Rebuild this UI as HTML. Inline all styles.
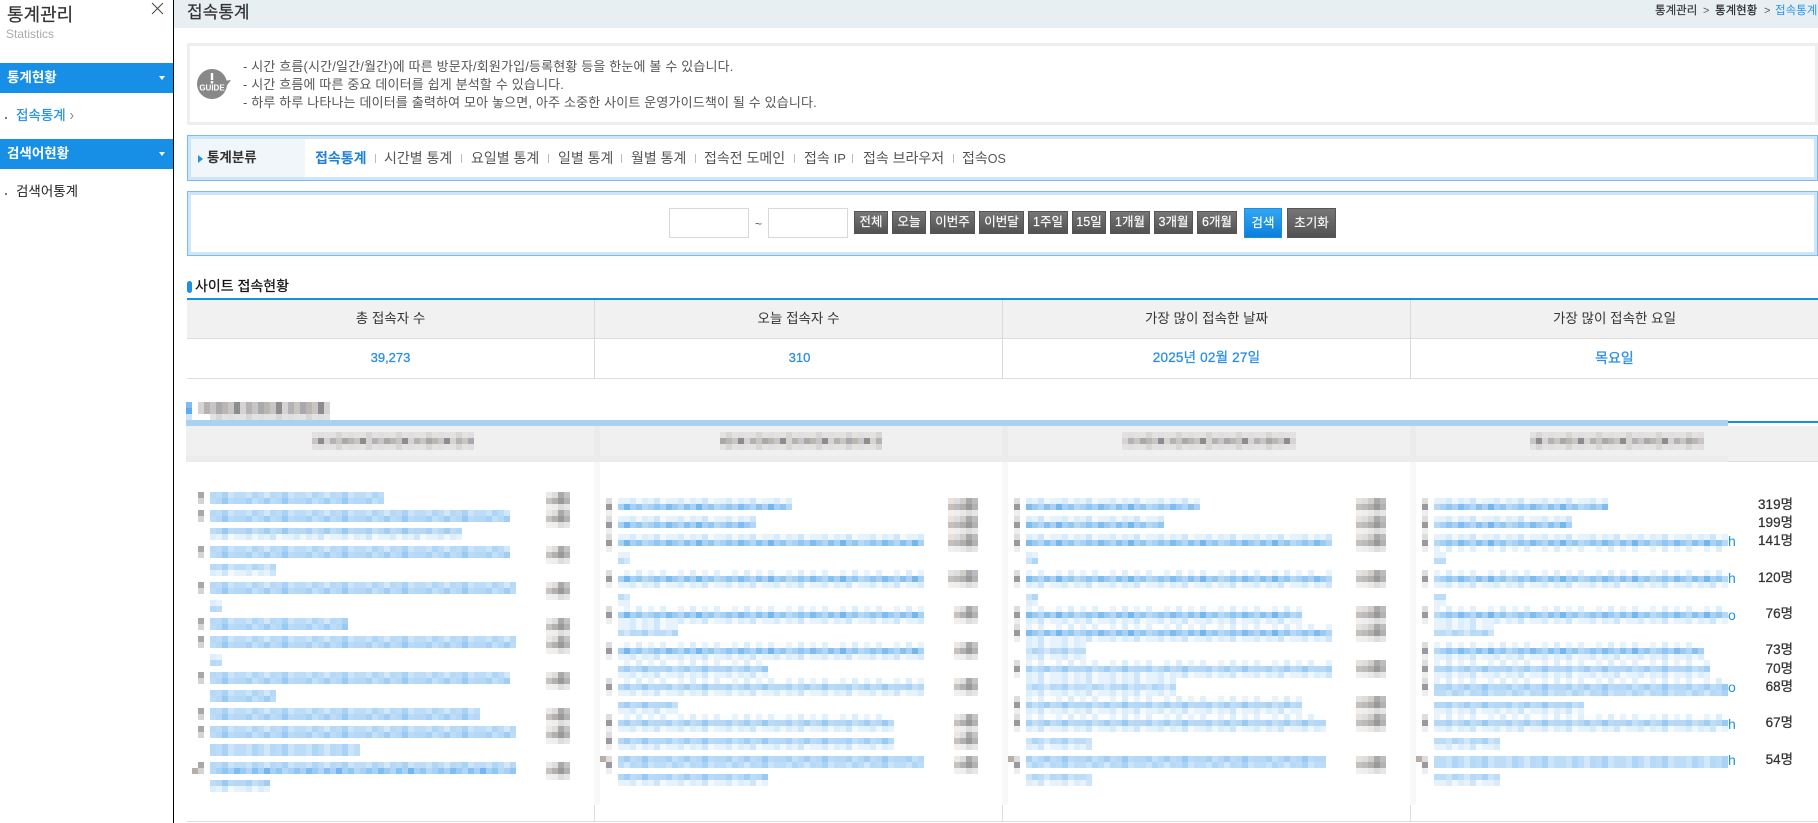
<!DOCTYPE html>
<html lang="ko"><head><meta charset="utf-8"><title>접속통계</title>
<style>
html,body{margin:0;padding:0;background:#fff}
body{width:1818px;height:823px;position:relative;overflow:hidden;font-family:"Liberation Sans","Noto Sans CJK KR",sans-serif;color:#333}
.a{position:absolute}
.t{position:absolute;white-space:nowrap;line-height:16px;font-size:14px}
.c{position:absolute;white-space:nowrap;line-height:16px;font-size:14px;text-align:center}
.b{font-weight:700}
.sep{position:absolute;width:1px;height:9px;top:154px;background:#bbb}
.btn{position:absolute;top:211px;height:21px;border:1px solid #555;background:linear-gradient(#767676,#525252);color:#fff;font-size:12.5px;line-height:21px;text-align:center;box-sizing:content-box;-webkit-text-stroke:.15px #fff}
.cnt{position:absolute;right:25px;font-size:13.500px;line-height:16px;color:#333;-webkit-text-stroke:.25px #333;white-space:nowrap}
.h{position:absolute;left:1728px;font-size:14px;line-height:16px;color:#1f8fe8}
.g1{font-size:13px;letter-spacing:.16px;color:#555}
.v{color:#2a8fe8;-webkit-text-stroke:.3px #2a8fe8;font-size:13px}
svg rect{height:6px}
svg .s{fill:url(#ps)}svg .m{fill:url(#pm)}svg .n{fill:url(#pn)}svg .l{fill:url(#pl)}svg .x{fill:url(#px)}svg .g{fill:url(#pg)}svg .k{fill:url(#pk)}
</style></head><body>

<!-- sidebar -->
<div class="a" style="left:173px;top:0;width:1px;height:823px;background:#000"></div>
<div class="t" style="left:7px;top:5px;font-size:18px;line-height:20px;color:#333;-webkit-text-stroke:.2px #333">통계관리</div>
<div class="t" style="left:6px;top:26px;font-size:12px;color:#aaa">Statistics</div>
<svg class="a" style="left:151px;top:2px" width="13" height="13"><path d="M1 1L12 12M12 1L1 12" stroke="#444" stroke-width="1" fill="none"/></svg>
<div class="a" style="left:0;top:63px;width:173px;height:30px;background:#178fe6"></div>
<div class="t b" style="left:7px;top:70px;color:#fff;font-size:13.500px">통계현황</div>
<svg class="a" style="left:159px;top:76px" width="6" height="4"><path d="M0 0H6L3 4Z" fill="#fff"/></svg>
<div class="a" style="left:5px;top:117px;width:2px;height:2px;background:#777"></div>
<div class="t" style="left:16px;top:108px;color:#1f8fe8;font-size:13.500px;-webkit-text-stroke:.2px #1f8fe8">접속통계</div>
<svg class="a" style="left:70px;top:113px" width="4" height="6"><path d="M.5 0L3 3L.5 6" stroke="#888" fill="none"/></svg>
<div class="a" style="left:0;top:139px;width:173px;height:30px;background:#178fe6"></div>
<div class="t b" style="left:7px;top:146px;color:#fff;font-size:13.500px">검색어현황</div>
<svg class="a" style="left:159px;top:152px" width="6" height="4"><path d="M0 0H6L3 4Z" fill="#fff"/></svg>
<div class="a" style="left:5px;top:193px;width:2px;height:2px;background:#777"></div>
<div class="t" style="left:16px;top:184px;color:#222;font-size:13.500px">검색어통계</div>

<!-- top bar -->
<div class="a" style="left:174px;top:0;width:1644px;height:28px;background:#e8eff3"></div>
<div class="t" style="left:187px;top:3px;font-size:17px;line-height:20px;color:#333;-webkit-text-stroke:.2px #333">접속통계</div>
<div class="t" style="left:1655px;top:3px;font-size:11.500px;color:#333;-webkit-text-stroke:.15px #333">통계관리</div>
<div class="t" style="left:1703px;top:3px;font-size:11px;color:#555">&gt;</div>
<div class="t" style="left:1715px;top:3px;font-size:11.500px;color:#222;-webkit-text-stroke:.15px #222">통계현황</div>
<div class="t" style="left:1764px;top:3px;font-size:11px;color:#555">&gt;</div>
<div class="t" style="left:1775px;top:3px;font-size:11.500px;color:#2a93ea">접속통계</div>

<!-- guide -->
<div class="a" style="left:187px;top:43px;width:1625px;height:76px;border:3px solid #eee"></div>
<svg class="a" style="left:196px;top:68px" width="36" height="32"><circle cx="16" cy="16" r="15" fill="#888"/><path d="M27 13L35 12L29 20Z" fill="#888"/><rect x="14.800" y="5" width="2.400" style="height:7px" fill="#fff"/><rect x="14.800" y="13" width="2.400" style="height:2.500px" fill="#fff"/><text x="16" y="22.500" text-anchor="middle" font-family="Liberation Sans" font-size="8" font-weight="700" fill="#fff">GUIDE</text></svg>
<div class="t g1" style="left:243px;top:59px">- 시간 흐름(시간/일간/월간)에 따른 방문자/회원가입/등록현황 등을 한눈에 볼 수 있습니다.</div>
<div class="t g1" style="left:243px;top:77px">- 시간 흐름에 따른 중요 데이터를 쉽게 분석할 수 있습니다.</div>
<div class="t g1" style="left:243px;top:95px">- 하루 하루 나타나는 데이터를 출력하여 모아 놓으면, 아주 소중한 사이트 운영가이드책이 될 수 있습니다.</div>

<!-- nav -->
<div class="a" style="left:187px;top:135px;width:1623px;height:38px;border:1px solid #7bbcf0;box-shadow:inset 0 0 0 3px #cfe6f8;padding:0 3px 6px 3px;box-sizing:content-box"></div>
<div class="a" style="left:191px;top:139px;width:114px;height:38px;background:#f1f6fa"></div>
<svg class="a" style="left:198px;top:155px" width="5" height="8"><path d="M0 0L5 4L0 8Z" fill="#1f8fe8"/></svg>
<div class="t b" style="left:207px;top:150px;color:#333;font-size:13.500px">통계분류</div>
<div class="t b" style="left:315px;top:150px;color:#1f82d8">접속통계</div>
<div class="sep" style="left:375px"></div>
<div class="t" style="left:384px;top:150px;color:#555">시간별 통계</div>
<div class="sep" style="left:461px"></div>
<div class="t" style="left:471px;top:150px;color:#555">요일별 통계</div>
<div class="sep" style="left:548px"></div>
<div class="t" style="left:558px;top:150px;color:#555">일별 통계</div>
<div class="sep" style="left:621px"></div>
<div class="t" style="left:631px;top:150px;color:#555">월별 통계</div>
<div class="sep" style="left:695px"></div>
<div class="t" style="left:704px;top:150px;color:#555">접속전 도메인</div>
<div class="sep" style="left:794px"></div>
<div class="t" style="left:804px;top:150px;color:#555">접속 <span style="font-size:13px">IP</span></div>
<div class="sep" style="left:852px"></div>
<div class="t" style="left:863px;top:150px;color:#555">접속 브라우저</div>
<div class="sep" style="left:953px"></div>
<div class="t" style="left:962px;top:150px;color:#555">접속<span style="font-size:12.500px">OS</span></div>

<!-- search -->
<div class="a" style="left:187px;top:191px;width:1623px;height:57px;border:1px solid #7bbcf0;box-shadow:inset 0 0 0 3px #cfe6f8;padding:0 3px 6px 3px"></div>
<div class="a" style="left:669px;top:208px;width:78px;height:28px;border:1px solid #d8d8d8"></div>
<div class="a" style="left:768px;top:208px;width:78px;height:28px;border:1px solid #d8d8d8"></div>
<div class="t" style="left:755px;top:216px;font-size:12px;color:#555">~</div>
<div class="btn" style="left:854px;width:32px">전체</div>
<div class="btn" style="left:892px;width:32px">오늘</div>
<div class="btn" style="left:930px;width:43px">이번주</div>
<div class="btn" style="left:979px;width:43px">이번달</div>
<div class="btn" style="left:1028px;width:38px">1주일</div>
<div class="btn" style="left:1072px;width:32px">15일</div>
<div class="btn" style="left:1110px;width:38px">1개월</div>
<div class="btn" style="left:1154px;width:37px">3개월</div>
<div class="btn" style="left:1197px;width:38px">6개월</div>
<div class="btn" style="left:1244px;top:208px;width:36px;height:28px;line-height:28px;background:linear-gradient(#35a6f5,#0a80dc);border-color:#1a8fe0">검색</div>
<div class="btn" style="left:1287px;top:208px;width:47px;height:28px;line-height:28px">초기화</div>

<!-- summary -->
<div class="a" style="left:187px;top:281px;width:5px;height:12px;border-radius:2.500px;background:#1f8fe8"></div>
<div class="t" style="left:195px;top:278px;font-size:14px;color:#111;-webkit-text-stroke:.25px #111">사이트 접속현황</div>
<div class="a" style="left:187px;top:298px;width:1631px;height:2px;background:#178fe6"></div>
<div class="a" style="left:187px;top:300px;width:1631px;height:38px;background:#f1f1f1"></div>
<div class="a" style="left:187px;top:338px;width:1631px;height:1px;background:#ddd"></div>
<div class="a" style="left:187px;top:378px;width:1631px;height:1px;background:#ddd"></div>
<div class="a" style="left:594px;top:300px;width:1px;height:78px;background:#d9d9d9"></div>
<div class="a" style="left:1002px;top:300px;width:1px;height:78px;background:#d9d9d9"></div>
<div class="a" style="left:1410px;top:300px;width:1px;height:78px;background:#d9d9d9"></div>
<div class="c" style="left:187px;width:407px;top:311px;font-size:13.500px;color:#333">총 접속자 수</div>
<div class="c" style="left:595px;width:407px;top:311px;font-size:13.500px;color:#333">오늘 접속자 수</div>
<div class="c" style="left:1003px;width:407px;top:311px;font-size:13.500px;color:#333">가장 많이 접속한 날짜</div>
<div class="c" style="left:1411px;width:407px;top:311px;font-size:13.500px;color:#333">가장 많이 접속한 요일</div>
<div class="c v" style="left:187px;width:407px;top:350px">39,273</div>
<div class="c v" style="left:596px;width:407px;top:350px">310</div>
<div class="c v" style="left:1003px;width:407px;top:350px;font-size:13.500px;letter-spacing:.2px">2025년 02월 27일</div>
<div class="c v" style="left:1411px;width:407px;top:350px;font-size:14px">목요일</div>

<!-- lower table backgrounds -->
<div class="a" style="left:186px;top:426px;width:1632px;height:36px;background:#f0f0f0"></div>
<div class="a" style="left:186px;top:456px;width:1542px;height:6px;background:#ececec"></div>
<div class="a" style="left:1728px;top:461px;width:90px;height:1px;background:#ddd"></div>
<div class="a" style="left:186px;top:420px;width:1542px;height:6px;background:#a8d2f0"></div>
<div class="a" style="left:1728px;top:421px;width:90px;height:2px;background:#178fe6"></div>
<div class="a" style="left:594px;top:426px;width:6px;height:36px;background:#ebebeb"></div>
<div class="a" style="left:1002px;top:426px;width:6px;height:36px;background:#ebebeb"></div>
<div class="a" style="left:1410px;top:426px;width:6px;height:36px;background:#ebebeb"></div>
<div class="a" style="left:594px;top:462px;width:6px;height:343px;background:#f8f8f8"></div>
<div class="a" style="left:1002px;top:462px;width:6px;height:343px;background:#f8f8f8"></div>
<div class="a" style="left:1410px;top:462px;width:6px;height:343px;background:#f8f8f8"></div>
<div class="a" style="left:594px;top:805px;width:1px;height:16px;background:#ddd"></div>
<div class="a" style="left:1002px;top:805px;width:1px;height:16px;background:#ddd"></div>
<div class="a" style="left:1410px;top:805px;width:1px;height:16px;background:#ddd"></div>
<div class="a" style="left:187px;top:821px;width:1631px;height:1px;background:#ddd"></div>

<!-- mosaic -->
<svg class="a" style="left:0;top:0" width="1818" height="823">
<defs>
<pattern id="ps" patternUnits="userSpaceOnUse" width="72" height="6"><rect width="72" fill="#a8d2f5"/><rect x="6" width="6" fill="#8fc6f2"/><rect x="18" width="6" fill="#7fbdf0"/><rect x="24" width="6" fill="#9bcbf3"/><rect x="30" width="6" fill="#b1d6f6"/><rect x="36" width="6" fill="#86c1f1"/><rect x="48" width="6" fill="#74b7ef"/><rect x="60" width="6" fill="#92c7f2"/><rect x="66" width="6" fill="#b6d9f6"/></pattern>
<pattern id="pm" patternUnits="userSpaceOnUse" width="60" height="6"><rect width="60" fill="#bcdcf7"/><rect x="6" width="6" fill="#c9e3f9"/><rect x="12" width="6" fill="#aed6f6"/><rect x="24" width="6" fill="#d1e7fa"/><rect x="30" width="6" fill="#b5d9f7"/><rect x="42" width="6" fill="#a9d3f5"/><rect x="48" width="6" fill="#cbe4f9"/></pattern>
<pattern id="pn" patternUnits="userSpaceOnUse" width="60" height="6"><rect width="60" fill="#b4d8f6"/><rect x="6" width="6" fill="#a8d2f5"/><rect x="12" width="6" fill="#c2e0f8"/><rect x="24" width="6" fill="#a2cef4"/><rect x="30" width="6" fill="#bcdcf7"/><rect x="42" width="6" fill="#98caf3"/><rect x="48" width="6" fill="#b9dbf7"/></pattern>
<pattern id="pl" patternUnits="userSpaceOnUse" width="48" height="6"><rect width="48" fill="#e6f2fc"/><rect x="6" width="6" fill="#d8ebfb"/><rect x="12" width="6" fill="#f0f7fd"/><rect x="18" width="6" fill="#dceefb"/><rect x="30" width="6" fill="#cfe6fa"/><rect x="36" width="6" fill="#f3f9fe"/></pattern>
<pattern id="px" patternUnits="userSpaceOnUse" width="54" height="6"><rect width="54" fill="#fbfdff"/><rect x="0" width="6" fill="#e8f3fc"/><rect x="12" width="6" fill="#e2f0fc"/><rect x="30" width="6" fill="#e8f3fc"/><rect x="42" width="6" fill="#ddeefb"/></pattern>
<pattern id="pg" patternUnits="userSpaceOnUse" width="42" height="6"><rect width="42" fill="#c8c6c4"/><rect x="6" width="6" fill="#a9a9ab"/><rect x="12" width="6" fill="#bcb6b2"/><rect x="24" width="6" fill="#8e8c8e"/><rect x="30" width="6" fill="#d6d4d2"/><rect x="36" width="6" fill="#b4b2b4"/></pattern>
<pattern id="pk" patternUnits="userSpaceOnUse" width="30" height="6"><rect width="30" fill="#e4e2e0"/><rect x="6" width="6" fill="#d8d6d4"/><rect x="18" width="6" fill="#e0dee0"/></pattern>
<g id="bu"><rect y="-6" width="6" fill="#ddd"/><rect width="6" fill="#9a9a9e"/><rect y="6" width="6" fill="#eee"/></g>
<g id="bv"><rect width="6" fill="#a8a8aa"/><rect y="6" width="6" fill="#d4d4d4"/></g>
<g id="c5"><rect y="-6" x="0" width="6" fill="#e6e2de"/><rect y="-6" x="6" width="6" fill="#ddd"/><rect y="-6" x="12" width="6" fill="#d2cdc8"/><rect y="-6" x="18" width="6" fill="#a9a9ab"/><rect y="-6" x="24" width="6" fill="#bcbcbc"/><rect x="0" width="6" fill="#c6c0bc"/><rect x="6" width="6" fill="#bbb"/><rect x="12" width="6" fill="#b2aeac"/><rect x="18" width="6" fill="#999"/><rect x="24" width="6" fill="#b2b2b2"/><rect y="6" x="0" width="6" fill="#f2f0ee"/><rect y="6" x="6" width="6" fill="#eee"/><rect y="6" x="12" width="6" fill="#e8e8e8"/><rect y="6" x="18" width="6" fill="#ddd"/><rect y="6" x="24" width="6" fill="#e6e6e6"/></g>
<g id="c4"><rect y="-6" x="0" width="6" fill="#ebe8e6"/><rect y="-6" x="6" width="6" fill="#ddd"/><rect y="-6" x="12" width="6" fill="#a9a9ab"/><rect y="-6" x="18" width="6" fill="#c4c4c4"/><rect x="0" width="6" fill="#c6c2c0"/><rect x="6" width="6" fill="#b4b0ae"/><rect x="12" width="6" fill="#999"/><rect x="18" width="6" fill="#b2b2b2"/><rect y="6" x="0" width="6" fill="#f2f0ee"/><rect y="6" x="6" width="6" fill="#eee"/><rect y="6" x="12" width="6" fill="#ddd"/><rect y="6" x="18" width="6" fill="#e6e6e6"/></g>
</defs>

<!-- blurred headings -->
<rect x="186" y="402" width="6" fill="#7dbcf0"/><rect x="186" y="408" width="6" fill="#5eaced"/><rect x="186" y="414" width="6" fill="#cfe4f8"/>
<rect class="g" x="198" y="402" width="132"/><rect class="g" x="198" y="408" width="132"/><rect class="k" x="210" y="414" width="120"/>
<rect class="k" x="312" y="432" width="162"/><rect class="g" x="312" y="438" width="162"/><rect class="k" x="312" y="444" width="162"/>
<rect class="k" x="720" y="432" width="162"/><rect class="g" x="720" y="438" width="162"/><rect class="k" x="720" y="444" width="162"/>
<rect class="k" x="1122" y="432" width="174"/><rect class="g" x="1122" y="438" width="174"/><rect class="k" x="1122" y="444" width="174"/>
<rect class="k" x="1530" y="432" width="174"/><rect class="g" x="1530" y="438" width="174"/><rect class="k" x="1530" y="444" width="174"/>

<!-- column 1 -->
<rect class="m" x="210" y="492" width="174"/><rect class="n" x="210" y="498" width="174"/>
<rect class="m" x="210" y="510" width="300"/><rect class="n" x="210" y="516" width="300"/>
<rect class="n" x="210" y="528" width="252"/><rect class="l" x="210" y="534" width="252"/>
<rect class="m" x="210" y="546" width="300"/><rect class="n" x="210" y="552" width="300"/>
<rect class="m" x="210" y="564" width="66"/><rect class="l" x="210" y="570" width="66"/>
<rect class="m" x="210" y="582" width="306"/><rect class="n" x="210" y="588" width="306"/>
<rect class="l" x="210" y="600" width="12"/><rect class="m" x="210" y="606" width="12"/>
<rect class="m" x="210" y="618" width="138"/><rect class="n" x="210" y="624" width="138"/>
<rect class="m" x="210" y="636" width="306"/><rect class="n" x="210" y="642" width="306"/>
<rect class="l" x="210" y="654" width="12"/><rect class="m" x="210" y="660" width="12"/>
<rect class="m" x="210" y="672" width="300"/><rect class="n" x="210" y="678" width="300"/>
<rect class="m" x="210" y="690" width="66"/><rect class="n" x="210" y="696" width="66"/>
<rect class="m" x="210" y="708" width="270"/><rect class="n" x="210" y="714" width="270"/>
<rect class="m" x="210" y="726" width="306"/><rect class="n" x="210" y="732" width="306"/>
<rect class="m" x="210" y="744" width="150"/><rect class="m" x="210" y="750" width="150"/>
<rect class="m" x="210" y="762" width="306"/><rect class="s" x="210" y="768" width="306"/>
<rect class="n" x="210" y="780" width="60"/><rect class="l" x="210" y="786" width="60"/>
<use href="#bv" x="198" y="492"/><use href="#bv" x="198" y="510"/><use href="#bv" x="198" y="546"/><use href="#bv" x="198" y="582"/><use href="#bv" x="198" y="618"/><use href="#bv" x="198" y="636"/><use href="#bv" x="198" y="672"/><use href="#bv" x="198" y="708"/><use href="#bv" x="198" y="726"/><use href="#bv" x="198" y="762"/>
<rect x="192" y="768" width="6" fill="#b8aea8"/>
<use href="#c4" x="546" y="498"/><use href="#c4" x="546" y="516"/><use href="#c4" x="546" y="552"/><use href="#c4" x="546" y="588"/><use href="#c4" x="546" y="624"/><use href="#c4" x="546" y="642"/><use href="#c4" x="546" y="678"/><use href="#c4" x="546" y="714"/><use href="#c4" x="546" y="732"/><use href="#c4" x="546" y="768"/>

<!-- column 2 -->
<rect class="l" x="618" y="498" width="174"/><rect class="s" x="618" y="504" width="174"/>
<rect class="l" x="618" y="516" width="138"/><rect class="s" x="618" y="522" width="138"/>
<rect class="l" x="618" y="534" width="306"/><rect class="s" x="618" y="540" width="306"/>
<rect class="l" x="618" y="552" width="12"/><rect class="m" x="618" y="558" width="12"/>
<rect class="x" x="618" y="570" width="306"/><rect class="s" x="618" y="576" width="306"/><rect class="l" x="618" y="582" width="306"/>
<rect class="m" x="618" y="594" width="12"/><rect class="l" x="618" y="600" width="12"/>
<rect class="x" x="618" y="606" width="306"/><rect class="s" x="618" y="612" width="306"/><rect class="l" x="618" y="618" width="306"/>
<rect class="l" x="618" y="624" width="60"/><rect class="m" x="618" y="630" width="60"/>
<rect class="x" x="618" y="642" width="306"/><rect class="s" x="618" y="648" width="306"/><rect class="l" x="618" y="654" width="306"/>
<rect class="x" x="618" y="660" width="150"/><rect class="n" x="618" y="666" width="150"/><rect class="l" x="618" y="672" width="150"/>
<rect class="x" x="618" y="678" width="306"/><rect class="n" x="618" y="684" width="306"/><rect class="l" x="618" y="690" width="306"/>
<rect class="n" x="618" y="702" width="60"/><rect class="l" x="618" y="708" width="60"/>
<rect class="x" x="618" y="714" width="276"/><rect class="n" x="618" y="720" width="276"/><rect class="l" x="618" y="726" width="276"/>
<rect class="n" x="618" y="738" width="276"/><rect class="l" x="618" y="744" width="276"/>
<rect class="n" x="618" y="756" width="306"/><rect class="m" x="618" y="762" width="306"/>
<rect class="n" x="618" y="774" width="150"/><rect class="l" x="618" y="780" width="150"/>
<use href="#bu" x="606" y="504"/><use href="#bu" x="606" y="522"/><use href="#bu" x="606" y="540"/><use href="#bu" x="606" y="576"/><use href="#bu" x="606" y="612"/><use href="#bu" x="606" y="648"/><use href="#bu" x="606" y="684"/><use href="#bu" x="606" y="720"/><use href="#bu" x="606" y="738"/><use href="#bu" x="606" y="762"/>
<rect x="600" y="756" width="6" fill="#b8aea8"/>
<use href="#c5" x="948" y="504"/><use href="#c5" x="948" y="522"/><use href="#c5" x="948" y="540"/><use href="#c5" x="948" y="576"/><use href="#c4" x="954" y="612"/><use href="#c4" x="954" y="648"/><use href="#c4" x="954" y="684"/><use href="#c4" x="954" y="720"/><use href="#c4" x="954" y="738"/><use href="#c4" x="954" y="762"/>

<!-- column 3 -->
<rect class="l" x="1026" y="498" width="174"/><rect class="s" x="1026" y="504" width="174"/>
<rect class="l" x="1026" y="516" width="138"/><rect class="s" x="1026" y="522" width="138"/>
<rect class="l" x="1026" y="534" width="306"/><rect class="s" x="1026" y="540" width="306"/>
<rect class="l" x="1026" y="552" width="12"/><rect class="m" x="1026" y="558" width="12"/>
<rect class="x" x="1026" y="570" width="306"/><rect class="s" x="1026" y="576" width="306"/><rect class="l" x="1026" y="582" width="306"/>
<rect class="m" x="1026" y="594" width="12"/><rect class="l" x="1026" y="600" width="12"/>
<rect class="x" x="1026" y="606" width="276"/><rect class="s" x="1026" y="612" width="276"/><rect class="l" x="1026" y="618" width="276"/>
<rect class="x" x="1026" y="624" width="306"/><rect class="s" x="1026" y="630" width="306"/><rect class="l" x="1026" y="636" width="306"/>
<rect class="l" x="1026" y="642" width="60"/><rect class="m" x="1026" y="648" width="60"/><rect class="l" x="1026" y="654" width="60"/>
<rect class="x" x="1026" y="660" width="306"/><rect class="n" x="1026" y="666" width="306"/><rect class="l" x="1026" y="672" width="306"/>
<rect class="l" x="1026" y="678" width="150"/><rect class="m" x="1026" y="684" width="150"/><rect class="l" x="1026" y="690" width="150"/>
<rect class="x" x="1026" y="696" width="276"/><rect class="n" x="1026" y="702" width="276"/><rect class="l" x="1026" y="708" width="276"/>
<rect class="x" x="1026" y="714" width="300"/><rect class="n" x="1026" y="720" width="300"/><rect class="l" x="1026" y="726" width="300"/>
<rect class="m" x="1026" y="738" width="66"/><rect class="l" x="1026" y="744" width="66"/>
<rect class="n" x="1026" y="756" width="300"/><rect class="m" x="1026" y="762" width="300"/>
<rect class="m" x="1026" y="774" width="66"/><rect class="l" x="1026" y="780" width="66"/>
<use href="#bu" x="1014" y="504"/><use href="#bu" x="1014" y="522"/><use href="#bu" x="1014" y="540"/><use href="#bu" x="1014" y="576"/><use href="#bu" x="1014" y="612"/><use href="#bu" x="1014" y="630"/><use href="#bu" x="1014" y="666"/><use href="#bu" x="1014" y="702"/><use href="#bu" x="1014" y="720"/><use href="#bu" x="1014" y="762"/>
<rect x="1008" y="756" width="6" fill="#b8aea8"/>
<use href="#c5" x="1356" y="504"/><use href="#c5" x="1356" y="522"/><use href="#c5" x="1356" y="540"/><use href="#c5" x="1356" y="576"/><use href="#c5" x="1356" y="612"/><use href="#c5" x="1356" y="630"/><use href="#c5" x="1356" y="666"/><use href="#c5" x="1356" y="702"/><use href="#c5" x="1356" y="720"/><use href="#c5" x="1356" y="762"/>

<!-- column 4 -->
<rect class="l" x="1434" y="498" width="174"/><rect class="s" x="1434" y="504" width="174"/>
<rect class="l" x="1434" y="516" width="138"/><rect class="s" x="1434" y="522" width="138"/>
<rect class="l" x="1434" y="534" width="294"/><rect class="s" x="1434" y="540" width="294"/><rect class="x" x="1434" y="546" width="294"/>
<rect class="l" x="1434" y="552" width="12"/><rect class="m" x="1434" y="558" width="12"/>
<rect class="x" x="1434" y="570" width="294"/><rect class="s" x="1434" y="576" width="294"/><rect class="l" x="1434" y="582" width="294"/>
<rect class="m" x="1434" y="594" width="12"/><rect class="l" x="1434" y="600" width="12"/>
<rect class="x" x="1434" y="606" width="294"/><rect class="s" x="1434" y="612" width="294"/><rect class="l" x="1434" y="618" width="294"/>
<rect class="l" x="1434" y="624" width="60"/><rect class="m" x="1434" y="630" width="60"/>
<rect class="x" x="1434" y="642" width="270"/><rect class="s" x="1434" y="648" width="270"/><rect class="l" x="1434" y="654" width="270"/>
<rect class="x" x="1434" y="660" width="276"/><rect class="n" x="1434" y="666" width="276"/><rect class="l" x="1434" y="672" width="276"/>
<rect class="x" x="1434" y="678" width="294"/><rect class="n" x="1434" y="684" width="294"/><rect class="m" x="1434" y="690" width="294"/>
<rect class="n" x="1434" y="702" width="150"/><rect class="l" x="1434" y="708" width="150"/>
<rect class="x" x="1434" y="714" width="294"/><rect class="n" x="1434" y="720" width="294"/><rect class="l" x="1434" y="726" width="294"/>
<rect class="m" x="1434" y="738" width="66"/><rect class="l" x="1434" y="744" width="66"/>
<rect class="m" x="1434" y="756" width="294"/><rect class="m" x="1434" y="762" width="294"/>
<rect class="m" x="1434" y="774" width="66"/><rect class="l" x="1434" y="780" width="66"/>
<use href="#bu" x="1422" y="504"/><use href="#bu" x="1422" y="522"/><use href="#bu" x="1422" y="540"/><use href="#bu" x="1422" y="576"/><use href="#bu" x="1422" y="612"/><use href="#bu" x="1422" y="648"/><use href="#bu" x="1422" y="666"/><use href="#bu" x="1422" y="684"/><use href="#bu" x="1422" y="720"/><use href="#bu" x="1422" y="762"/>
<rect x="1416" y="756" width="6" fill="#b8aea8"/>
</svg>

<div class="h" style="top:533px">h</div>
<div class="h" style="top:570px">h</div>
<div class="h" style="top:607px">o</div>
<div class="h" style="top:679px">o</div>
<div class="h" style="top:716px">h</div>
<div class="h" style="top:752px">h</div>

<div class="cnt" style="top:497px">319명</div>
<div class="cnt" style="top:515px">199명</div>
<div class="cnt" style="top:533px">141명</div>
<div class="cnt" style="top:570px">120명</div>
<div class="cnt" style="top:606px">76명</div>
<div class="cnt" style="top:642px">73명</div>
<div class="cnt" style="top:661px">70명</div>
<div class="cnt" style="top:679px">68명</div>
<div class="cnt" style="top:715px">67명</div>
<div class="cnt" style="top:752px">54명</div>

</body></html>
